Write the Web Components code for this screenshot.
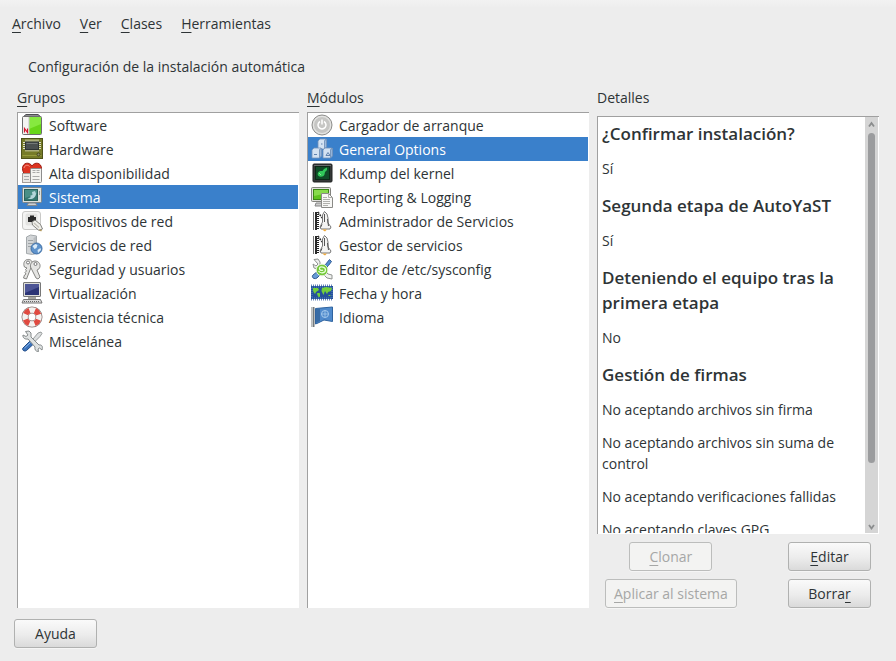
<!DOCTYPE html>
<html lang="es">
<head>
<meta charset="utf-8">
<title>Configuración de la instalación automática</title>
<style>
  body { margin: 0; background: #ededed; }
</style>
</head>
<body>
<yast-window>
  <yast-menubar slot="menu">
    <yast-menu key="A">rchivo</yast-menu>
    <yast-menu key="V">er</yast-menu>
    <yast-menu key="C">lases</yast-menu>
    <yast-menu key="H">erramientas</yast-menu>
  </yast-menubar>
  <span slot="title">Configuración de la instalación automática</span>

  <yast-list key="G" rest="rupos">
    <yast-row icon="software">Software</yast-row>
    <yast-row icon="hardware">Hardware</yast-row>
    <yast-row icon="ha">Alta disponibilidad</yast-row>
    <yast-row icon="system" selected>Sistema</yast-row>
    <yast-row icon="netdev">Dispositivos de red</yast-row>
    <yast-row icon="netsrv">Servicios de red</yast-row>
    <yast-row icon="keys">Seguridad y usuarios</yast-row>
    <yast-row icon="virtual">Virtualización</yast-row>
    <yast-row icon="support">Asistencia técnica</yast-row>
    <yast-row icon="tools">Miscelánea</yast-row>
  </yast-list>

  <yast-list key="M" rest="ódulos">
    <yast-row icon="power">Cargador de arranque</yast-row>
    <yast-row icon="cubes" selected>General Options</yast-row>
    <yast-row icon="kdump">Kdump del kernel</yast-row>
    <yast-row icon="report">Reporting &amp; Logging</yast-row>
    <yast-row icon="shuttle">Administrador de Servicios</yast-row>
    <yast-row icon="shuttle">Gestor de servicios</yast-row>
    <yast-row icon="sysconfig">Editor de /etc/sysconfig</yast-row>
    <yast-row icon="time">Fecha y hora</yast-row>
    <yast-row icon="flag">Idioma</yast-row>
  </yast-list>

  <yast-details>
    <yast-topic heading="¿Confirmar instalación?"><p>Sí</p></yast-topic>
    <yast-topic heading="Segunda etapa de AutoYaST"><p>Sí</p></yast-topic>
    <yast-topic heading="Deteniendo el equipo tras la primera etapa"><p>No</p></yast-topic>
    <yast-topic heading="Gestión de firmas">
      <p>No aceptando archivos sin firma</p>
      <p>No aceptando archivos sin suma de control</p>
      <p>No aceptando verificaciones fallidas</p>
      <p>No aceptando claves GPG</p>
    </yast-topic>
    <yast-button slot="left" disabled><u>C</u>lonar</yast-button>
    <yast-button slot="left" disabled><u>A</u>plicar al sistema</yast-button>
    <yast-button slot="right"><u>E</u>ditar</yast-button>
    <yast-button slot="right">Borra<u>r</u></yast-button>
  </yast-details>

  <yast-button slot="footer">Ayuda</yast-button>
</yast-window>

<script>
const ICONS = {
  software: `<path d="M2 3 5 .5h12L20 3z" fill="#8d8d90" stroke="#4c4c50"/><rect x="1.5" y="2.500" width="19" height="18" rx="1" fill="#f4f4f2" stroke="#6d6d6d"/><path d="M8 3h12v17H8z" fill="#68d619"/><path d="M8 3h12v7L8 15z" fill="#86e93f"/><path d="M8 3v17" stroke="#c6c6c6"/><path d="M3.500 18.500v-4l3 4v-4" fill="none" stroke="#d4152d" stroke-width="1.200"/>`,
  hardware: `<rect x=".5" y=".5" width="21" height="20" fill="#767b28" stroke="#4e521a"/><path d="M1.500 17.500h19" stroke="#969b3c"/><path d="M4.500 3h13M4.500 12h13" stroke="#e0e0cf" stroke-width="3" stroke-dasharray="1 1"/><path d="M3.500 4v8M18.500 4v8" stroke="#e0e0cf" stroke-width="3" stroke-dasharray="1 1"/><rect x="4.500" y="4" width="13" height="7.500" fill="#4b5050" stroke="#2f3434"/><path d="M5.500 5.500h11" stroke="#747979"/><circle cx="17.500" cy="16.500" r="1.500" fill="#8f8f6a" stroke="#44471a"/>`,
  ha: `<path d="M11 20C5 15 1.500 11 1.500 6.500c0-6 7-7 9.500-2.500 2.500-4.500 9.500-3.500 9.500 2.500C20.500 11 17 15 11 20z" fill="#dd3421" stroke="#9d1c12"/><path d="M3 6c.5-3 4-3.500 5.500-1.500" stroke="#f79585" fill="none"/><rect x="1.500" y="11.500" width="8" height="9" fill="#ece9e5" stroke="#a59d98"/><rect x="9.500" y="6.500" width="11" height="14" rx="1" fill="#f3f3f1" stroke="#8d8d8d"/><path d="M11.500 8.500h3m1 0h3M11.500 10.500h3m1 0h3M11.500 14.500h7m-7 3h7M3 14.500h5m-5 3h5" stroke="#aaa"/>`,
  system: `<rect x="1.500" y="1.500" width="19" height="15" rx="1" fill="#dce1dd" stroke="#7d8589"/><rect x="3.500" y="3.500" width="13" height="11" fill="#35776f" stroke="#2a625d"/><path d="M4 4h12v4L4 12z" fill="#4a8f86"/><path d="M6.500 12.500c4 1.500 8.500-.5 8.500-5l-1-2.500-3 1 .5 3-2 .5 0 2z" fill="#b4d6da"/><path d="M18.500 5v4" stroke="#8e9a94"/><path d="M6 19.500 7.500 17h7l1.500 2.500z" fill="#cbd1d4" stroke="#81888d"/>`,
  netdev: `<rect x="1.500" y="1.500" width="18" height="18" rx="2.500" fill="#f4f4f3" stroke="#c9c9c7"/><rect x="4.500" y="3.500" width="12" height="12" rx="2" fill="#e3e3e1"/><path d="M7 12V7h2V5.500h4V7h2v5z" fill="#2a2a2a"/><path d="m11 12 3-2 5.500 4.500L21.500 19 18 20.500 11.500 15z" fill="#f0efea" stroke="#777773" stroke-width=".9"/><path d="m13 13 5 4.500" stroke="#c4c2ba" stroke-width="1.200"/><path d="m18.500 19.500 2 1.500" stroke="#b09558" stroke-width="1.500"/>`,
  netsrv: `<path d="m5.500 3 4-2 6 1v17l-4 1.500-6-1z" fill="#d2d5d7" stroke="#a5aaad"/><path d="M7 6.500h5m-5 3h5m-5 3h4" stroke="#9ea3a6"/><path d="m12.500 4 2.500-1.500v17L12.500 20.500z" fill="#b9bdc0"/><circle cx="15.500" cy="14.500" r="5.500" fill="#5f93cc" stroke="#3f6ea3"/><path d="m11.500 12 3-2 2 1-1 3-2 1zm5 4 3-2 .5 2-3 3z" fill="#dcecf8"/>`,
  keys: `<g fill="#e5e5e3" stroke="#858582"><path d="M3.500 9C2 6 3 2 6.500 1.500s6 2.500 5 6L10 9.500 5.500 21l-3-1 1-3 1.500-1-1-1.500 1.500-1.500-1-1.500L6 10z"/><path d="M9.500 9c-.5-3 1.500-6 4.500-6s5.500 2.500 5 5.500c-.3 2-1.500 3-3 3.500l3 7-2 2-2-1-4-8z"/></g><circle cx="7" cy="4.500" r="1.500" fill="#fff" stroke="#777"/><circle cx="14.500" cy="6" r="1.500" fill="#fff" stroke="#777"/>`,
  virtual: `<rect x="2.500" y=".5" width="17" height="14" rx=".5" fill="#dddeda" stroke="#777"/><rect x="4" y="2" width="14" height="11" fill="#2b3475"/><path d="M4 2h14v3L4 11z" fill="#4d5596"/><path d="M7 16h8" stroke="#a4a49e" stroke-width="2"/><path d="m2.500 17.500 17 0 1.500 3.500H1z" fill="#ddd" stroke="#777"/><path d="M3 19.500h16" stroke="#666" stroke-dasharray="1 1"/>`,
  support: `<circle cx="11" cy="11" r="7" fill="none" stroke="#8b7774" stroke-width="7"/><circle cx="11" cy="11" r="7" fill="none" stroke="#f4f2f0" stroke-width="5.500"/><circle cx="11" cy="11" r="7" fill="none" stroke="#e04a40" stroke-width="5.500" stroke-dasharray="5.500 5.500" stroke-dashoffset="-2.750"/>`,
  tools: `<path d="m17 3 3-1 1 1.500-2 3-8 8-2-2z" fill="#dcdfe0" stroke="#818687" stroke-width=".8"/><path d="m2 18 7-7 3.500 3-7 6.500c-2 1.500-5-.5-3.500-2.500z" fill="#3b73bc" stroke="#234d87"/><path d="m3.500 18 6-5.500" stroke="#8db7e8"/><path d="M4.500 1.500 8 1l2 2v4l8 8c3-.5 4 1.500 3 5l-2.500-2-1.500 1 .5 2.500c-3 0-4-2-3.500-4.500l-7-8C4 9.500 1.500 8 2 5l3 1.500 2-1.500z" fill="#dfe2e2" stroke="#858a8b"/>`,
  power: `<circle cx="11" cy="11" r="10" fill="#d8d8d6" stroke="#8e8e8c"/><circle cx="11" cy="11" r="8.500" fill="#c6c6c4" stroke="#e8e8e6"/><path d="M9 7.500a4 4 0 1 0 4 0M11 5.500v5" stroke="#fff" stroke-width="1.500" fill="none"/>`,
  cubes: `<g stroke="#7593b9" stroke-width=".8"><path d="m7 3 2-2h6l-1.500 2v8H7z" fill="#d3e2f2"/><path d="m13.500 3 2-2v8l-2 2z" fill="#9ab9dd"/><path d="m1 12 2-2h7l-1.500 2v8H1z" fill="#d3e2f2"/><path d="m8.500 12 2-2v8l-2 2z" fill="#94b4da"/><path d="m12 12 2-2h7l-1.500 2v8H12z" fill="#d3e2f2"/><path d="m19.500 12 2-2v8l-2 2z" fill="#94b4da"/></g><path d="M3 16.500h3m11-2-2 3h4zM10 6h1.500" stroke="#6082ae" fill="none"/>`,
  kdump: `<rect x="2" y="2" width="19" height="18" rx="1" fill="#353838" stroke="#202222"/><path d="M3 3.500h17" stroke="#6a6d6d"/><rect x="4.500" y="4.500" width="14" height="13" fill="#104c28" stroke="#0c2817"/><path d="m16 5.500-3 1.500-1.500 2c-3.500-.5-5.500 1.500-4.500 4.500 2 2 5.500 1.500 6.500-1l.5-2.500 2-2z" fill="#31c85a"/><path d="m8 11 2 2" stroke="#8be99b"/>`,
  report: `<rect x=".5" y="1.500" width="19" height="14" rx="1" fill="#e0e0dc" stroke="#83837e"/><rect x="2.500" y="3.500" width="15" height="10" fill="#5fc321" stroke="#3a8516"/><path d="M3 4h14v3L3 10z" fill="#87db4c"/><path d="M4 20h8l-1-3H5z" fill="#ccc" stroke="#888"/><path d="M10.500 7.500h7l4 4v10h-11z" fill="#f7f7f5" stroke="#8a8a86"/><path d="M17.500 7.500v4h4M12 11.500h4m-4 2h7m-7 2h7m-7 2h7m-7 2h5" stroke="#b0b0ac" fill="none"/>`,
  shuttle: `<path d="M2.500 2v18" stroke="#777"/><path d="M5 2v18" stroke="#2a2a2a" stroke-width="2"/><path d="M7 2v18" stroke="#222" stroke-dasharray="1 1" stroke-width="2"/><path d="m7 2 4 6" stroke="#333" stroke-width="1.500" stroke-dasharray="2 1"/><path d="m13.500 1.500 2.500 2.500 1 4v5l3 4-1 2h-9l-1-2 2.500-5V5z" fill="#f4f4f3" stroke="#777"/><path d="M13.500 4v8m3-3 1 7M11 14.500l-1.500 3" stroke="#555"/><path d="M11 19.500h5l-2 2z" fill="#f0a838"/>`,
  sysconfig: `<path d="m18.500 1.500 2 2-3 4-9 9-3-2 9-8z" fill="#518ed0" stroke="#335c94"/><path d="M3 1.500 7 1l2 3v4l8 8 4 1v4l-5-1-9-9-4-1-1-4 3 2 2-2z" fill="#f0f1f0" stroke="#8f938f"/><path d="m2 17 5-4 3 3-4 4c-3 2-6-1-4-3z" fill="#679bd5" stroke="#315b94"/><circle cx="11" cy="12" r="5.800" fill="#74c83a" stroke="#dff0d0"/><path d="M7.500 13c2 3 7 2 7-1s-5-4-6-2c-.5 2 2 3 3.500 2" fill="none" stroke="#e6ffd9" stroke-width="1.300"/>`,
  time: `<path d="M0 3.500h22M0 17.500h22" stroke="#6484b8" stroke-width="2" stroke-dasharray="1 1"/><path d="M0 4h22v13H0z" fill="#24519a"/><path d="M1 5h20v11H1z" fill="none" stroke="#5b85bf" stroke-dasharray="1 1"/><path d="m2 6 5 0 1 2-3 2-1 2-1.500-2L2 8zm9 0 4-1 6 1-1 3-3 1-1 2-2-3-1.500 4-2-4z" fill="#72d13a"/><path d="M6.500 11.500h2v3h-1zm11 2h2" fill="#72d13a" stroke="#72d13a"/>`,
  flag: `<path d="M2 1v20" stroke="#747a7c" stroke-width="3"/><path d="M1.500 1v20" stroke="#c1c5c6"/><path d="M4.500 2.500 21.500 1v14.500L13 14l-6 3-2.500 1z" fill="#4f8acc" stroke="#2f639f"/><path d="m5 3 4-.5V15l-4 2z" fill="#376ba5"/><circle cx="14" cy="8" r="3.500" fill="none" stroke="#a7cbee"/><path d="M11 8h6m-3-3v6" stroke="#a7cbee" stroke-width=".8"/>`
};

const FONT = '"Open Sans", "Noto Sans", sans-serif';

const define = (name, render, after) => customElements.define(name, class extends HTMLElement {
  connectedCallback() {
    if (this.shadowRoot) return;
    this.attachShadow({ mode: 'open' }).innerHTML = render(this);
    if (after) after(this, this.shadowRoot);
  }
});

define('yast-window', () => `
  <style>
    :host { display: flex; flex-direction: column; box-sizing: border-box; min-height: 100vh;
      color: #2e3436; background: linear-gradient(#f2f2f2, #ededed 8px);
      font: 14px/20px ${FONT}; }
    h1 { margin: 23px 28px 0; font: inherit; }
    main { flex: 1; display: grid; grid-template-columns: repeat(3, minmax(0, 1fr)); gap: 8px; padding: 11px 17px 0; }
    footer { padding: 11px 14px 13px; display: flex; }
  </style>
  <slot name="menu"></slot>
  <h1><slot name="title"></slot></h1>
  <main><slot></slot></main>
  <footer><slot name="footer"></slot></footer>`);

define('yast-menubar', () => `
  <style>:host { display: flex; gap: 19px; padding: 14px 12px 0; }</style>
  <slot></slot>`, el => el.setAttribute('role', 'menubar'));

define('yast-menu', el => `
  <style>
    :host { display: block; }
    button { all: unset; display: block; white-space: nowrap; }
    button:focus-visible { outline: 1px dotted #3a80cb; }
    u { text-decoration-thickness: 1px; text-underline-offset: 3px; }
  </style>
  <button type="button" role="menuitem"><u>${el.getAttribute('key')}</u><slot></slot></button>`);

define('yast-list', el => `
  <style>
    :host { display: flex; flex-direction: column; gap: 4px; }
    u { text-decoration-thickness: 1px; text-underline-offset: 3px; text-decoration-skip-ink: none; }
    .box { flex: 1; background: #fff; border: solid #a0a0a0; border-width: 1px 0 0 1px; padding-right: 1px; }
  </style>
  <div id="label"><u>${el.getAttribute('key')}</u>${el.getAttribute('rest')}</div>
  <div class="box" role="listbox" aria-labelledby="label"><slot></slot></div>`,
  el => el.addEventListener('click', e => {
    const row = e.target.closest('yast-row');
    if (!row) return;
    el.querySelectorAll('yast-row').forEach(r => r.toggleAttribute('selected', r === row));
  }));

define('yast-row', el => `
  <style>
    :host { display: flex; align-items: center; gap: 6px; height: 24px; padding-left: 3px; white-space: nowrap; cursor: default; }
    :host([selected]) { background: #3a80cb; color: #fff; }
    svg { width: 22px; height: 22px; flex: none; }
    span { line-height: 24px; padding-top: 2px; }
  </style>
  <svg viewBox="0 0 22 22" aria-hidden="true">${ICONS[el.getAttribute('icon')]}</svg>
  <span><slot></slot></span>`, el => el.setAttribute('role', 'option'));

define('yast-topic', el => `
  <style>
    :host { display: block; margin-bottom: 14px; }
    h2 { margin: 0 0 12px; font-size: 17px; font-weight: 600; line-height: 25px; }
    div { display: flex; flex-direction: column; gap: 12px; line-height: 21px; }
    ::slotted(p) { margin: 0; }
  </style>
  <h2>${el.getAttribute('heading')}</h2>
  <div><slot></slot></div>`);

define('yast-details', () => `
  <style>
    :host { display: flex; flex-direction: column; gap: 8px; }
    .view { flex: 1; min-height: 0; display: flex; background: #fff; border: solid #a0a0a0; border-width: 1px 0 0 1px; padding: 0 1px 1px 0; }
    .text { flex: 1; contain: size; overflow: auto; scrollbar-width: none; padding: 4px 4px 0; }
    .bar { width: 13px; background: #d5d5d5; display: flex; flex-direction: column; align-items: center; }
    .bar svg { width: 7px; height: 16px; flex: none; }
    .track { flex: 1; width: 7px; }
    .thumb { width: 7px; height: 86%; border-radius: 4px; background: #9b9c9e; }
    .actions { display: flex; justify-content: space-between; padding: 0 8px; }
    .actions div { display: flex; flex-direction: column; gap: 8px; align-items: center; }
  </style>
  <div>Detalles</div>
  <div class="view">
    <div class="text" tabindex="0"><slot></slot></div>
    <div class="bar" aria-hidden="true">
      <svg viewBox="0 0 7 16"><path d="M1 9.500 3.500 6 6 9.500" fill="none" stroke="#8b8d8e" stroke-width="1.800"/></svg>
      <div class="track"><div class="thumb"></div></div>
      <svg viewBox="0 0 7 16"><path d="M1 8 3.500 11.500 6 8" fill="none" stroke="#8b8d8e" stroke-width="1.800"/></svg>
    </div>
  </div>
  <div class="actions">
    <div><slot name="left"></slot></div>
    <div><slot name="right"></slot></div>
  </div>`);

define('yast-button', el => `
  <style>
    :host { display: block; }
    button { display: block; box-sizing: border-box; min-width: 83px; height: 29px; padding: 1px 8px 0; margin: 0;
      font: inherit; color: inherit; border: 1px solid #b0b1b0; border-radius: 3px;
      background: linear-gradient(#fafafa, #ececec 55%, #dadada); box-shadow: 0 1px #f5f5f5; white-space: nowrap; }
    button:disabled { color: #a6a7a6; background: #f3f3f2; border-color: #bcbdbc; }
    ::slotted(u) { text-decoration-thickness: 1px; text-underline-offset: 3px; text-decoration-skip-ink: none; }
  </style>
  <button type="button"${el.hasAttribute('disabled') ? ' disabled' : ''}><slot></slot></button>`);
</script>
</body>
</html>
